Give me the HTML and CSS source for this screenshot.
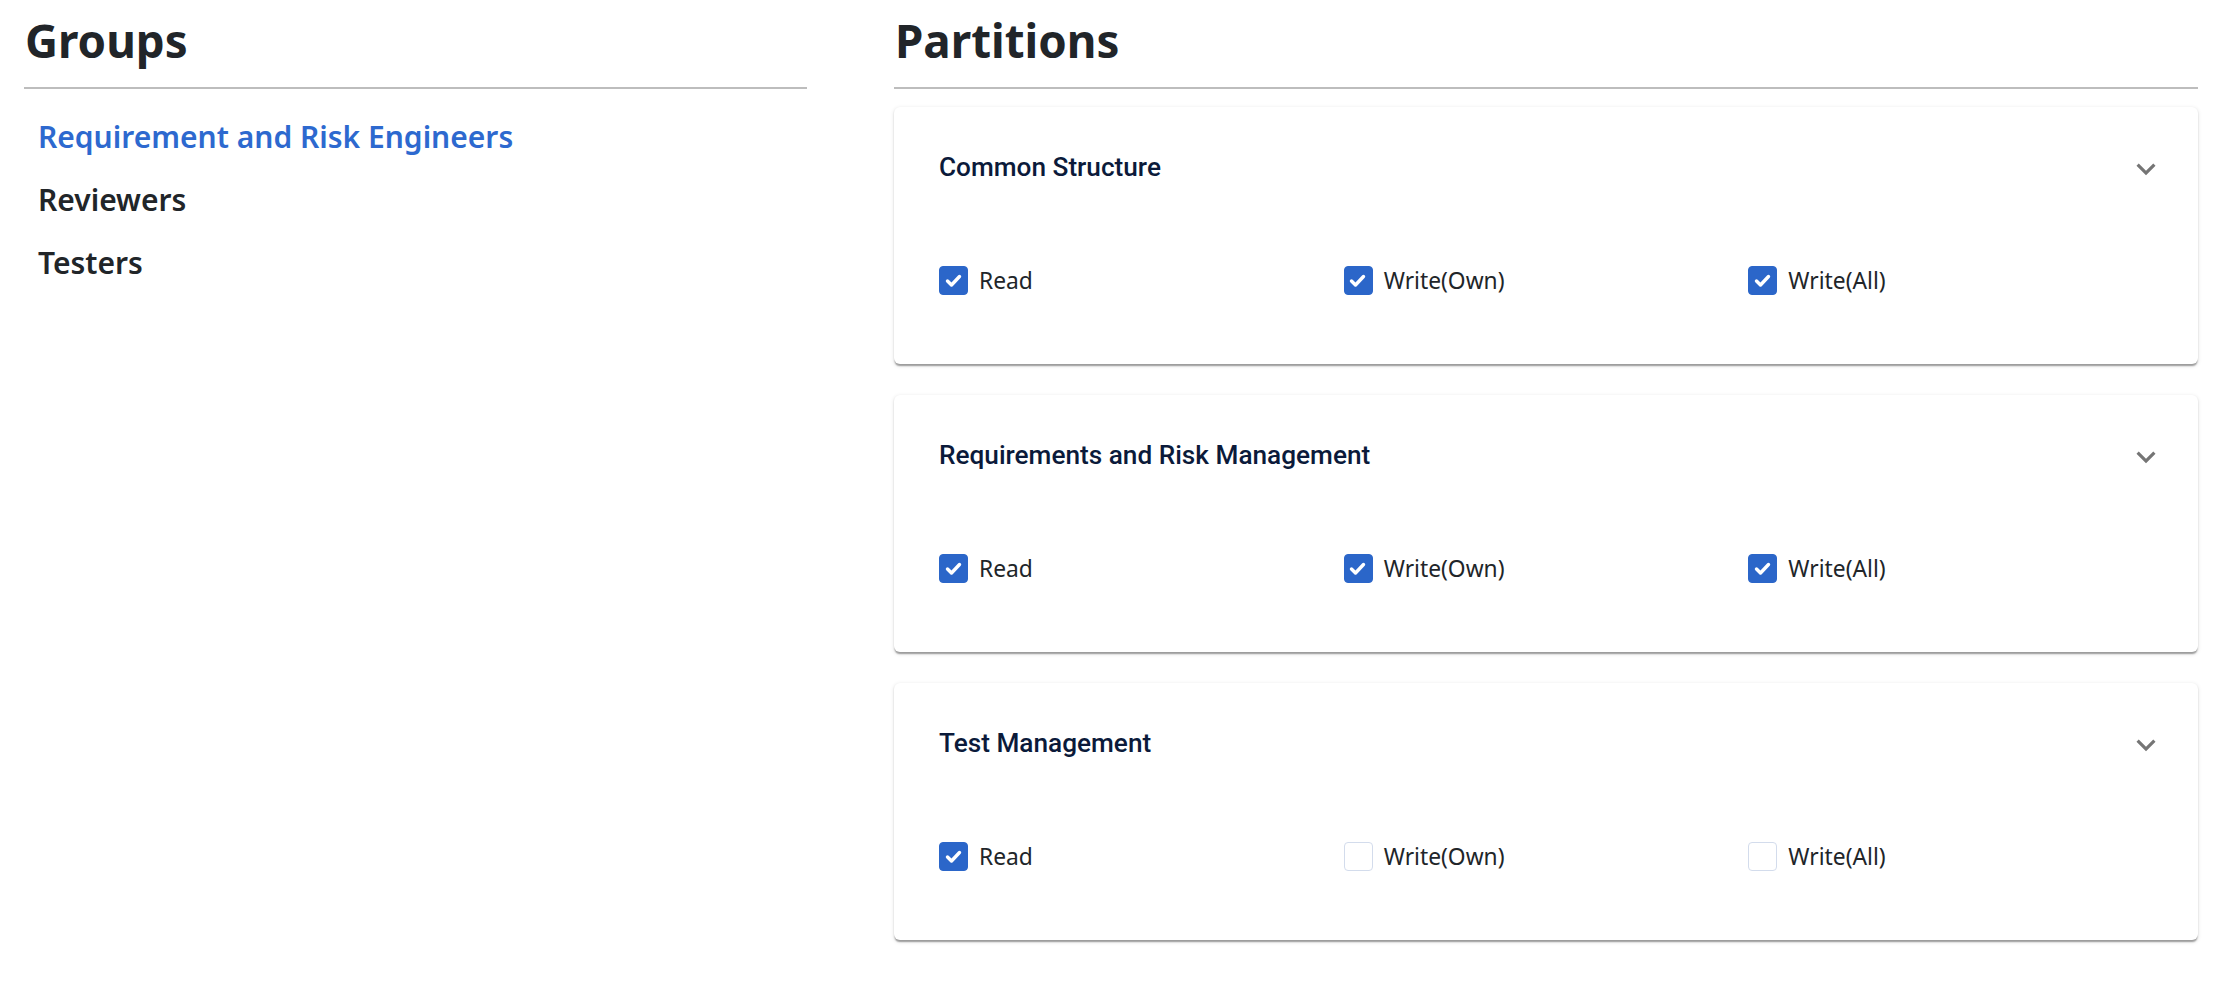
FILE: index.html
```html
<!DOCTYPE html>
<html lang="en">
<head>
<meta charset="utf-8">
<title>Groups and Partitions</title>
<link rel="stylesheet" href="styles.css">
</head>
<body>
<main class="page">
  <section class="col col-groups">
    <h2 class="section-title">Groups</h2>
    <ul class="group-list">
      <li class="group-item active">Requirement and Risk Engineers</li>
      <li class="group-item">Reviewers</li>
      <li class="group-item">Testers</li>
    </ul>
  </section>

  <section class="col col-partitions">
    <h2 class="section-title">Partitions</h2>
    <div class="cards">
      <article class="card">
        <div class="card-head">
          <h3 class="card-title">Common Structure</h3>
          <svg class="expand" viewBox="0 0 24 24"><path d="M16.59 8.59 12 13.17 7.41 8.59 6 10l6 6 6-6z"/></svg>
        </div>
        <div class="perm-row">
          <label class="perm"><span class="box checked"><svg viewBox="0 0 29 29"><polyline points="8.5,15 12.5,19 20.5,10.5"/></svg></span>Read</label>
          <label class="perm"><span class="box checked"><svg viewBox="0 0 29 29"><polyline points="8.5,15 12.5,19 20.5,10.5"/></svg></span>Write(Own)</label>
          <label class="perm"><span class="box checked"><svg viewBox="0 0 29 29"><polyline points="8.5,15 12.5,19 20.5,10.5"/></svg></span>Write(All)</label>
        </div>
      </article>

      <article class="card">
        <div class="card-head">
          <h3 class="card-title">Requirements and Risk Management</h3>
          <svg class="expand" viewBox="0 0 24 24"><path d="M16.59 8.59 12 13.17 7.41 8.59 6 10l6 6 6-6z"/></svg>
        </div>
        <div class="perm-row">
          <label class="perm"><span class="box checked"><svg viewBox="0 0 29 29"><polyline points="8.5,15 12.5,19 20.5,10.5"/></svg></span>Read</label>
          <label class="perm"><span class="box checked"><svg viewBox="0 0 29 29"><polyline points="8.5,15 12.5,19 20.5,10.5"/></svg></span>Write(Own)</label>
          <label class="perm"><span class="box checked"><svg viewBox="0 0 29 29"><polyline points="8.5,15 12.5,19 20.5,10.5"/></svg></span>Write(All)</label>
        </div>
      </article>

      <article class="card">
        <div class="card-head">
          <h3 class="card-title">Test Management</h3>
          <svg class="expand" viewBox="0 0 24 24"><path d="M16.59 8.59 12 13.17 7.41 8.59 6 10l6 6 6-6z"/></svg>
        </div>
        <div class="perm-row">
          <label class="perm"><span class="box checked"><svg viewBox="0 0 29 29"><polyline points="8.5,15 12.5,19 20.5,10.5"/></svg></span>Read</label>
          <label class="perm"><span class="box"></span>Write(Own)</label>
          <label class="perm"><span class="box"></span>Write(All)</label>
        </div>
      </article>
    </div>
  </section>
</main>
</body>
</html>
```

FILE: styles.css
```css
* { box-sizing: border-box; }

html, body {
  margin: 0;
  padding: 0;
  background: #ffffff;
}

body {
  font-family: "Noto Sans", "Open Sans", "Liberation Sans", sans-serif;
  color: #212529;
}

.page {
  display: grid;
  grid-template-columns: 783px 1304px;
  column-gap: 87px;
  padding: 12px 41px 40px 24px;
}

.section-title {
  margin: 0;
  font-size: 45.7px;
  line-height: 56px;
  font-weight: 700;
  color: #212529;
  padding-left: 1px;
  padding-bottom: 19px;
  border-bottom: 2px solid #bdbdbd;
}

.col-partitions .section-title {
  padding-left: 1px;
}

.group-list {
  list-style: none;
  margin: 16px 0 0;
  padding: 0 0 0 14px;
}

.group-item {
  font-size: 30px;
  line-height: 63px;
  font-weight: 600;
  color: #212529;
  cursor: pointer;
}

.group-item.active {
  color: #2d69cf;
}

.cards {
  display: flex;
  flex-direction: column;
  gap: 31px;
  margin-top: 18px;
}

.card {
  background: #ffffff;
  border-radius: 6px;
  padding: 45px 45px 69px;
  box-shadow: 0 3px 1.5px -1.5px rgba(0, 0, 0, 0.22),
              0 1.5px 1.5px 0 rgba(0, 0, 0, 0.14),
              0 1.5px 4.5px 0 rgba(0, 0, 0, 0.12);
}

.card-head {
  display: flex;
  align-items: center;
  justify-content: space-between;
  height: 30px;
  margin-right: -12px;
}

.card-title {
  margin: 0;
  font-family: Roboto, "Liberation Sans", sans-serif;
  font-weight: 500;
  font-size: 26.2px;
  line-height: 30px;
  color: #0b1a3a;
}

.expand {
  width: 38px;
  height: 38px;
  fill: #757575;
  margin-top: 3px;
  flex: none;
}

.perm-row {
  display: grid;
  grid-template-columns: repeat(3, 1fr);
  margin-top: 84px;
  height: 29px;
  align-items: center;
}

.perm {
  display: flex;
  align-items: center;
  gap: 11px;
  font-size: 22.8px;
  line-height: 29px;
  color: #212529;
}

.box {
  width: 29px;
  height: 29px;
  flex: none;
  border-radius: 4px;
  border: 1.5px solid #d3dcec;
  background: #ffffff;
  display: flex;
}

.box.checked {
  background: #2b66c9;
  border-color: #2b66c9;
}

.box svg {
  margin: -1.5px;
  width: 29px;
  height: 29px;
  flex: none;
}

.box svg polyline {
  fill: none;
  stroke: #ffffff;
  stroke-width: 3.4;
  stroke-linecap: round;
  stroke-linejoin: round;
}
```
